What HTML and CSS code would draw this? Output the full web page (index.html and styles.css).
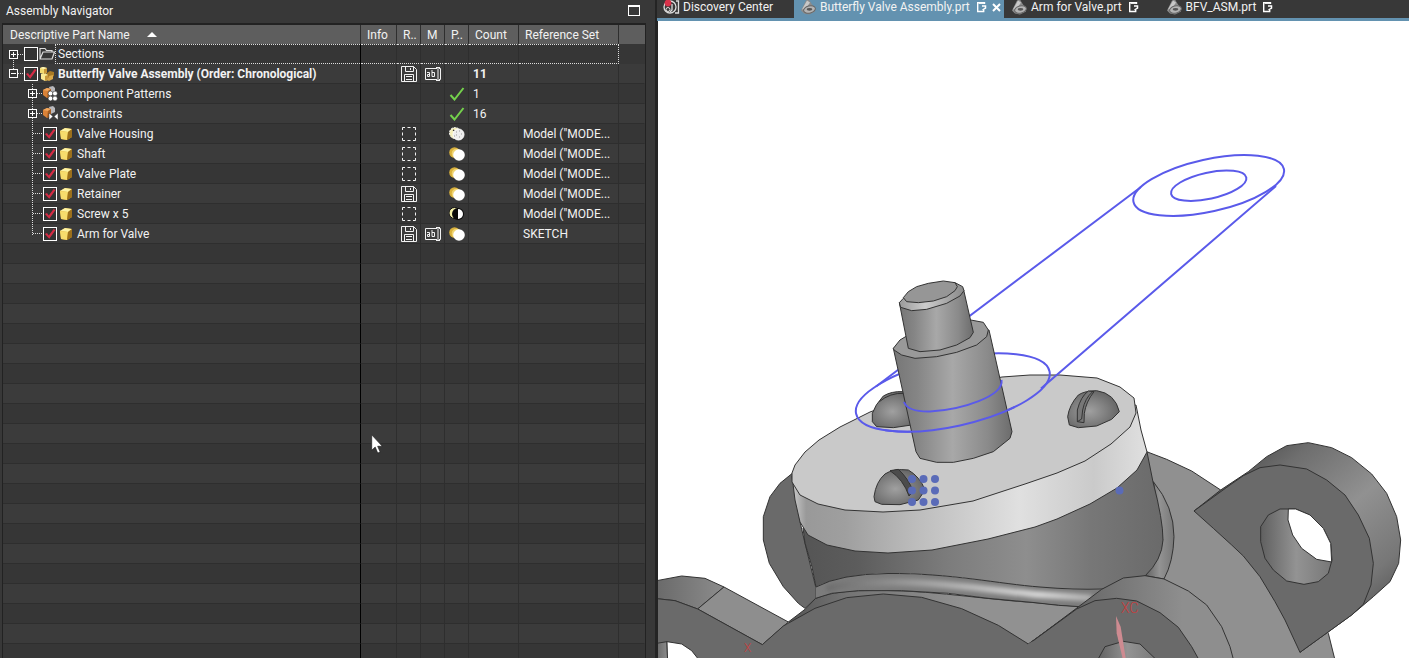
FILE: index.html
```html
<!DOCTYPE html>
<html lang="en">
<head>
<meta charset="utf-8">
<title>Assembly Navigator</title>
<link rel="stylesheet" href="styles.css">
</head>
<body>
<svg class="defs" aria-hidden="true">
  <symbol id="cube" viewBox="0 0 14 14"><path d="M1 4 6 1l7 1v8l-5 3-6-1z" fill="#d9a62e"/><path d="M1 4l5-3 7 1-4 3z" fill="#fdf3a4"/><path d="M1 4l8 1-1 8-6-1z" fill="#f7dc6c"/><path d="M9 5l4-3v8l-5 3z" fill="#9c701c"/></symbol>
  <symbol id="asm" viewBox="0 0 16 16"><path d="M1 2l3-1 4 1v5l-3 1-4-1z" fill="#f3dc70"/><path d="M8 7l3-2 4 1v4l-4 2-3-1z" fill="#a87a24"/><path d="M2 8l4-1 3 2v5l-3 1-4-2z" fill="#fbeb94"/><path d="M6 10l3-1v5l-3 1z" fill="#c8983a"/><path d="M10 10l4-1v4l-4 2-2-1z" fill="#d9a848"/><path d="M5 3l3-1v5l-3 1z" fill="#c8983a"/><path d="M1 2l3-1 4 1-3 1z" fill="#fff6b8"/></symbol>
  <symbol id="lump" viewBox="0 0 16 16"><path d="M7 1l4-1 2 2v4l-4 2z" fill="#b8b8bc"/><path d="M1 4l4-2 4 1v7l-4 2-4-3z" fill="#d98238"/><path d="M1 4l4-2 4 1-3 2z" fill="#f0a860"/><path d="M6 5l3-2v7l-4 2z" fill="#a35c20"/></symbol>
  <symbol id="pattern" viewBox="0 0 16 16"><use href="#lump"/><g fill="#fff" stroke="#333" stroke-width=".6"><circle cx="8.500" cy="7.500" r="2.400"/><circle cx="13" cy="7.500" r="2.400"/><circle cx="8.500" cy="12.500" r="2.400"/><circle cx="13" cy="12.500" r="2.400"/></g></symbol>
  <symbol id="constraint" viewBox="0 0 16 16"><use href="#lump"/><path d="M7 7l4 3.500-4 3.500zM16 7v7l-4-3.500z" fill="#fff" stroke="#333" stroke-width=".5"/></symbol>
  <symbol id="folder" viewBox="0 0 16 14"><path d="M1 12V1.500h5l1.500 2H13V5M1 12L4 5h11.500L13 12z" fill="none" stroke="#ddd" stroke-width="1.200"/></symbol>
  <symbol id="save" viewBox="0 0 16 16"><path d="M.5.5h12l3 3v12H.5zM4.500.500v5h8v-5M9.500 2v2M3.500 15.500v-7h9v7M5 10.500h6M5 13.500h6" fill="none" stroke="#f2f2f2"/></symbol>
  <symbol id="abi" viewBox="0 0 16 14"><path d="M12 1.500H.5v11H12M14 1.500h1.500v11H14M11 .5h4M11 13.500h4M13 .5v13" fill="none" stroke="#f2f2f2"/><path d="M2 5.500h2.500v4h-2v-2h2M7 3v6.500h2.500v-4H7" fill="none" stroke="#f2f2f2"/></symbol>
  <symbol id="dashed" viewBox="0 0 14 14"><path d="M.5 3V.5H3M5.500.500h3M11 .5h2.500V3M13.500 5.500v3M13.500 11v2.500H11M8.500 13.500h-3M3 13.500H.5V11M.5 8.500v-3" fill="none" stroke="#f2f2f2"/></symbol>
  <symbol id="tick" viewBox="0 0 16 14"><path d="M1.500 8l4 4.500L14.500 1" fill="none" stroke="#74d14c" stroke-width="2"/></symbol>
  <symbol id="pos" viewBox="0 0 16 14"><circle cx="5.500" cy="5.500" r="5.300" fill="#d9b13c"/><circle cx="7.500" cy="6.500" r="4.800" fill="#f0d470"/><circle cx="10" cy="8" r="5.800" fill="#fff"/></symbol>
  <symbol id="posmix" viewBox="0 0 16 14"><circle cx="6" cy="6" r="5.500" fill="#f4eeb8" stroke="#fff" stroke-dasharray="2 1"/><path d="M4 3l2 1-1 4 3 3" fill="none" stroke="#222" stroke-width="1.300"/><circle cx="9.500" cy="7.500" r="5.500" fill="#eee" stroke="#fff"/><path d="M7 5h1M10 4h1M12 7h1M7 8h1M10 10h1M5 9h1" stroke="#999"/></symbol>
  <symbol id="poshalf" viewBox="0 0 16 14"><circle cx="5.500" cy="6" r="5.500" fill="#f4f0a8" stroke="#111"/><circle cx="9" cy="7" r="6" fill="#0a0a0a"/><path d="M9 2a5 5 0 0 1 0 10z" fill="#fff"/></symbol>
  <symbol id="part" viewBox="0 0 16 15"><path d="M1 11L6 1l3-1 3 5 3 3v4l-6 3-5-1z" fill="#8b8b8b"/><path d="M2 10L7 1l3 2-4 6z" fill="#c8c8c8"/><ellipse cx="9.500" cy="10" rx="6" ry="3.600" fill="#b4b4b4" stroke="#666" transform="rotate(-14 9.500 10)"/><ellipse cx="9.500" cy="9.800" rx="2.800" ry="1.400" fill="#555"/></symbol>
  <symbol id="note" viewBox="0 0 11 12"><path d="M8.500 3V1.700H1.700v8.800h6V9" fill="none" stroke="#fff" stroke-width="1.400"/><path d="M3 1h5v1.800H3z" fill="#fff"/><path d="M6 5h3.500v2L6.500 9" fill="none" stroke="#fff" stroke-width="1.500"/></symbol>
</svg>

<main class="app">
  <section class="navigator">
    <header class="titlebar">
      <h1>Assembly Navigator</h1>
      <button class="maximize" aria-label="Maximize"></button>
    </header>
    <div class="grid">
      <table>
        <colgroup><col><col class="c-info"><col class="c-icon"><col class="c-icon"><col class="c-icon"><col class="c-count"><col class="c-ref"><col class="c-end"></colgroup>
        <thead><tr><th>Descriptive Part Name<span class="sort"></span></th><th>Info</th><th>R..</th><th>M</th><th>P..</th><th>Count</th><th>Reference Set</th><th></th></tr></thead>
        <tbody id="rows">
          <tr class="focused"><td class="name top-first"><div class="node"><button class="expander" aria-label="Expand Sections"></button><i class="stub"></i><input type="checkbox" id="n0"><label for="n0"><svg class="i-folder"><use href="#folder"/></svg><span>Sections</span></label></div></td><td></td><td></td><td></td><td></td><td></td><td></td><td></td></tr>
          <tr class="root"><td class="name top-last"><div class="node"><button class="expander open" aria-label="Collapse assembly"></button><i class="stub"></i><input type="checkbox" id="n1" checked><label for="n1"><svg class="i16"><use href="#asm"/></svg><span>Butterfly Valve Assembly (Order: Chronological)</span></label></div></td><td></td><td class="ic"><svg class="i16"><use href="#save"/></svg></td><td class="ic"><svg class="i-wide"><use href="#abi"/></svg></td><td></td><td>11</td><td></td><td></td></tr>
          <tr><td class="name child"><div class="node"><button class="expander" aria-label="Expand Component Patterns"></button><i class="stub"></i><svg class="i16"><use href="#pattern"/></svg><span class="text">Component Patterns</span></div></td><td></td><td></td><td></td><td class="ic"><svg class="i-wide"><use href="#tick"/></svg></td><td>1</td><td></td><td></td></tr>
          <tr><td class="name child"><div class="node"><button class="expander" aria-label="Expand Constraints"></button><i class="stub"></i><svg class="i16"><use href="#constraint"/></svg><span class="text">Constraints</span></div></td><td></td><td></td><td></td><td class="ic"><svg class="i-wide"><use href="#tick"/></svg></td><td>16</td><td></td><td></td></tr>
          <tr><td class="name child leaf"><div class="node"><i class="stub"></i><input type="checkbox" id="n2" checked><label for="n2"><svg class="i14"><use href="#cube"/></svg><span>Valve Housing</span></label></div></td><td></td><td class="ic"><svg class="i14"><use href="#dashed"/></svg></td><td></td><td class="ic"><svg class="i-wide"><use href="#posmix"/></svg></td><td></td><td>Model ("MODE...</td><td></td></tr>
          <tr><td class="name child leaf"><div class="node"><i class="stub"></i><input type="checkbox" id="n3" checked><label for="n3"><svg class="i14"><use href="#cube"/></svg><span>Shaft</span></label></div></td><td></td><td class="ic"><svg class="i14"><use href="#dashed"/></svg></td><td></td><td class="ic"><svg class="i-wide"><use href="#pos"/></svg></td><td></td><td>Model ("MODE...</td><td></td></tr>
          <tr><td class="name child leaf"><div class="node"><i class="stub"></i><input type="checkbox" id="n4" checked><label for="n4"><svg class="i14"><use href="#cube"/></svg><span>Valve Plate</span></label></div></td><td></td><td class="ic"><svg class="i14"><use href="#dashed"/></svg></td><td></td><td class="ic"><svg class="i-wide"><use href="#pos"/></svg></td><td></td><td>Model ("MODE...</td><td></td></tr>
          <tr><td class="name child leaf"><div class="node"><i class="stub"></i><input type="checkbox" id="n5" checked><label for="n5"><svg class="i14"><use href="#cube"/></svg><span>Retainer</span></label></div></td><td></td><td class="ic"><svg class="i16"><use href="#save"/></svg></td><td></td><td class="ic"><svg class="i-wide"><use href="#pos"/></svg></td><td></td><td>Model ("MODE...</td><td></td></tr>
          <tr><td class="name child leaf"><div class="node"><i class="stub"></i><input type="checkbox" id="n6" checked><label for="n6"><svg class="i14"><use href="#cube"/></svg><span>Screw x 5</span></label></div></td><td></td><td class="ic"><svg class="i14"><use href="#dashed"/></svg></td><td></td><td class="ic"><svg class="i-wide"><use href="#poshalf"/></svg></td><td></td><td>Model ("MODE...</td><td></td></tr>
          <tr><td class="name child leaf last"><div class="node"><i class="stub"></i><input type="checkbox" id="n7" checked><label for="n7"><svg class="i14"><use href="#cube"/></svg><span>Arm for Valve</span></label></div></td><td></td><td class="ic"><svg class="i16"><use href="#save"/></svg></td><td class="ic"><svg class="i-wide"><use href="#abi"/></svg></td><td class="ic"><svg class="i-wide"><use href="#pos"/></svg></td><td></td><td>SKETCH</td><td></td></tr>
        </tbody>
      </table>
    </div>
  </section>

  <section class="workspace">
    <nav class="tabs">
      <a class="tab discovery" href="#discovery"><svg class="i-disc" viewBox="0 0 18 16"><circle cx="7" cy="8" r="6" fill="none" stroke="#ddd" stroke-width="1.300"/><circle cx="5" cy="10.500" r="2" fill="none" stroke="#ddd"/><path d="M9 5v6l-2 2M13 2h2.500v12H12" fill="none" stroke="#ddd" stroke-width="1.300"/><circle cx="5" cy="4" r="3.400" fill="#d8324a"/></svg>Discovery Center</a>
      <div class="tab active"><a href="#butterfly"><svg class="i16"><use href="#part"/></svg>Butterfly Valve Assembly.prt</a><svg class="i-note"><use href="#note"/></svg><button class="close" aria-label="Close tab"><svg viewBox="0 0 9 9"><path d="M1 1l7 7M8 1L1 8" stroke="#fff" stroke-width="2"/></svg></button></div>
      <a class="tab" href="#arm"><svg class="i16"><use href="#part"/></svg>Arm for Valve.prt<svg class="i-note"><use href="#note"/></svg></a>
      <a class="tab last-tab" href="#bfv"><svg class="i16"><use href="#part"/></svg>BFV_ASM.prt<svg class="i-note"><use href="#note"/></svg></a>
    </nav>
    <svg class="scene" viewBox="658 21 751 637" preserveAspectRatio="xMinYMin slice" role="img" aria-label="Butterfly valve model">
      <defs>
        <linearGradient id="gShaft"><stop offset="0" stop-color="#767676"/><stop offset=".2" stop-color="#858585"/><stop offset=".5" stop-color="#a8a8a8"/><stop offset=".8" stop-color="#8a8a8a"/><stop offset="1" stop-color="#6c6c6c"/></linearGradient>
        <linearGradient id="gChamfer"><stop offset="0" stop-color="#999"/><stop offset=".4" stop-color="#ccc"/><stop offset="1" stop-color="#8a8a8a"/></linearGradient>
        <linearGradient id="gRim"><stop offset="0" stop-color="#ccc"/><stop offset=".04" stop-color="#999"/><stop offset=".15" stop-color="#9f9f9f"/><stop offset=".35" stop-color="#bcbcbc"/><stop offset=".64" stop-color="#e0e0e0"/><stop offset=".85" stop-color="#cacaca"/><stop offset="1" stop-color="#e0e0e0"/></linearGradient>
        <linearGradient id="gBody"><stop offset="0" stop-color="#555"/><stop offset=".15" stop-color="#5c5c5c"/><stop offset=".4" stop-color="#7c7c7c"/><stop offset=".62" stop-color="#8e8e8e"/><stop offset=".8" stop-color="#777"/><stop offset="1" stop-color="#6a6a6a"/></linearGradient>
        <linearGradient id="gFillet"><stop offset="0" stop-color="#6c6c6c"/><stop offset=".35" stop-color="#a0a0a0"/><stop offset=".8" stop-color="#d8d8d8"/><stop offset="1" stop-color="#b0b0b0"/></linearGradient>
        <linearGradient id="gEar" x1="0" y1="0" x2=".8" y2="1"><stop offset=".12" stop-color="#4c4c4c"/><stop offset=".28" stop-color="#6e6e6e"/><stop offset=".55" stop-color="#919191"/><stop offset=".8" stop-color="#777"/><stop offset="1" stop-color="#4c4c4c"/></linearGradient>
        <linearGradient id="gEar2"><stop offset="0" stop-color="#444"/><stop offset=".35" stop-color="#707070"/><stop offset=".75" stop-color="#8e8e8e"/></linearGradient>
        <linearGradient id="gLeft"><stop offset="0" stop-color="#6a6a6a"/><stop offset="1" stop-color="#8c8c8c"/></linearGradient>
        <linearGradient id="gSkirt"><stop offset="0" stop-color="#555"/><stop offset=".2" stop-color="#747474"/><stop offset=".6" stop-color="#919191"/></linearGradient>
        <linearGradient id="gHole"><stop offset="0" stop-color="#606060"/><stop offset=".5" stop-color="#939393"/><stop offset="1" stop-color="#777"/></linearGradient>
        <radialGradient id="gScrew" cx=".42" cy=".55" r=".6"><stop offset="0" stop-color="#a0a0a0"/><stop offset=".6" stop-color="#7c7c7c"/><stop offset="1" stop-color="#636363"/></radialGradient>
        <filter id="soft" x="-5%" y="-60%" width="110%" height="220%"><feGaussianBlur stdDeviation="7"/></filter>
        <clipPath id="front"><path d="M885 398h130v50H885z"/></clipPath>
      </defs>
      <g class="solid">
        <g transform="translate(1030 420) scale(.333333)">
          <path fill="#909090" d="M350 95 410 118 485 153 572 210 895 640 915 720 0 720 0 450 300 300z"/>
          <path fill="url(#gEar)" d="M492 273 572 210 655 155 710 110 770 77 835 68 905 83 965 113 1025 162 1070 220 1100 290 1112 360 1106 430 1080 485 1030 530 965 585 810 697 840 500 700 300z"/>
          <path fill="#6a6a6a" d="M492 273 600 195 640 167 690 143 750 135 830 147 890 180 945 225 985 285 1018 355 1030 430 1023 495 1000 553 965 585 810 697 765 600 735 545 690 470 640 408 605 375 550 325z"/>
          <path fill="url(#gHole)" d="M692 320 715 285 750 267 797 267 840 285 880 325 902 370 906 420 895 460 865 485 822 493 770 483 730 450 705 415 692 365z"/>
          <path fill="#fff" d="M775 267H797L840 285 880 325 902 370 905 426 860 418 815 385 788 345 774 300z"/>
          <path fill="url(#gHole)" d="M370 185Q432 260 432 350Q430 425 402 477L345 467 398 360z"/>
        </g>
        <g transform="translate(655 440) scale(.333333)">
          <path fill="#6a6a6a" d="M412 100 375 130 345 170 325 230 325 300 343 370 385 440 430 490 450 505 482 475 482 440 450 310 435 245z"/>
          <path fill="url(#gSkirt)" d="M400 546 450 508 482 475Q530 455 610 452C800 445 950 475 1140 488L1275 500 1120 612 700 640z"/>
          <path class="bare" fill="#7c7c7c" d="M482 440 530 418 600 406 700 400 840 405 1000 422 1140 437 1245 449 1341 449 1275 500 1140 488 1000 475 880 460 740 452 610 452 530 460 482 475z"/>
          <path class="bare glow" d="M515 446Q600 424 740 427C900 430 1050 455 1140 463L1310 474"/>
          <path fill="none" d="M482 475 530 460 610 452 740 452 880 460 1000 475 1140 488 1210 496 1275 500"/>
        </g>
        <path fill="url(#gBody)" d="M803 528 805 543 812 567 816 587Q840 574 888 573.500C950 573 1000 584 1040 587Q1075 590 1102 589L1145 576Q1162 560 1163 540Q1163 520 1153 482L1147 452 1000 470z"/>
        <path fill="url(#gRim)" d="M792 476 795 500 800 522 808 535 827 545 855 551 888 553 932 550 988 539 1035 527 1057 519 1090 504 1117 488 1137 470 1147 452 1141 430 1136 405z"/>
        <path fill="#c9c9c9" d="M792 482 792 473 795 465 805 452 819 440 840 427 870 412 930 390 1002 377 1030 375 1060 375 1097 378 1120 387 1134 398 1136 413 1130 427 1111 444 1085 461 1057 473 1025 484 973 501 920 510 883 512 845 510 818 504 800 495z"/>
        <g transform="translate(655 440) scale(.333333)">
          <path fill="url(#gLeft)" d="M5 422 80 408 150 415 207 441 128 507 60 482 5 476z"/>
          <path fill="#8e8e8e" d="M207 441 400 546 322 614 128 507z"/>
          <path fill="#6a6a6a" d="M5 476 60 482 128 507 322 614 385 558 480 505 575 473 685 462 800 472 920 506 1030 556 1120 612 1125 670 5 670z"/>
          <path fill="url(#gLeft)" d="M5 610 36 605 38 670 5 670z"/>
          <path fill="#fff" d="M36 605 80 612 110 632 140 670 38 670z"/>
        </g>
        <g transform="translate(1030 420) scale(.333333)">
          <path fill="url(#gEar2)" d="M-5 673 150 557 215 508 280 474 345 467 402 477 475 513 530 555 575 620 600 680 612 725H-5z"/>
          <path fill="#6a6a6a" d="M-5 673 140 567 195 542 260 535 320 543 390 578 445 622 485 680 510 725H-10z"/>
          <path fill="url(#gHole)" d="M200 725 225 680 280 664 330 672 385 725z"/>
          <path class="bare" fill="#6a6a6a" d="M-12 676 8 664 8 725-12 725z"/>
          <path class="bare" fill="#ce8b91" d="M258 588 272 620 288 720H279L260 640z"/>
        </g>
        <g transform="translate(840 270) scale(.333333)">
          <path fill="url(#gScrew)" d="M97 430Q105 405 130 378 155 363 190 365L240 400 215 465 160 473 110 470 97 455z"/>
          <path fill="none" d="M118 395Q150 368 192 370"/>
          <path fill="url(#gScrew)" d="M683 440Q688 405 715 375 735 362 770 362 825 370 838 425L815 448 770 468 715 473 688 465z"/>
          <path fill="#777" d="M712 455V420Q722 380 745 363L762 365Q738 395 733 430L732 458z"/>
          <path fill="none" d="M712 455 725 447 728 420Q735 385 757 366"/>
          <path fill="url(#gScrew)" d="M102 680Q108 635 135 612 160 595 205 600 240 620 255 660L235 690 180 704 125 703 105 695z"/>
          <path fill="#4c4c4c" d="M150 602 175 598Q205 625 220 665L207 678Q190 628 150 602z"/>
        </g>
      </g>
      <g class="sketch">
        <ellipse cx="952.800" cy="392.500" rx="99" ry="33.700" transform="rotate(-12.400 952.800 392.500)"/>
        <path d="M1141 187 876 386.500M1276 186 1041 388.500"/>
        <ellipse cx="1208.700" cy="185.500" rx="77" ry="26.200" transform="rotate(-12.400 1208.700 185.500)"/>
        <ellipse cx="1208.700" cy="185.700" rx="38.500" ry="13.100" transform="rotate(-12.400 1208.700 185.700)"/>
      </g>
      <g class="solid" transform="translate(840 270) scale(.333333)">
        <path fill="url(#gShaft)" d="M160 235 228 545 240 565 290 577 340 577 400 565 460 545 510 505 516 485 447 180z"/>
        <path fill="#999" d="M160 235 180 210 205 195 300 165 392 150 430 157 445 180 440 200 410 225 350 247 290 260 225 265 185 255 162 240z"/>
        <path fill="url(#gShaft)" d="M178 98 205 235 240 245 300 240 350 225 390 203 400 187 371 60z"/>
        <path fill="url(#gChamfer)" d="M178 98 182 112 215 122 260 118 320 100 360 78 372 62 368 50 345 38 190 85z"/>
        <path fill="#969696" d="M190 83 205 65 230 50 265 40 310 33 345 38 352 50 345 62 320 80 280 93 235 98 200 95z"/>
      </g>
      <g class="sketch">
        <g clip-path="url(#front)"><ellipse cx="952.800" cy="392.500" rx="99" ry="33.700" transform="rotate(-12.400 952.800 392.500)"/></g>
        <path d="M904 402Q908 412 930 411.500C962 410 1004 396 1001.500 380"/>
      </g>
      <g class="dots">
        <circle cx="912" cy="479" r="4"/><circle cx="923.500" cy="479" r="4"/><circle cx="935" cy="479" r="4"/>
        <circle cx="912" cy="490.500" r="4"/><circle cx="923.500" cy="490.500" r="4"/><circle cx="935" cy="490.500" r="4"/>
        <circle cx="912" cy="502" r="4"/><circle cx="923.500" cy="502" r="4"/><circle cx="935" cy="502" r="4"/>
        <circle cx="1119.500" cy="490.500" r="4"/>
      </g>
      <text class="axis" x="1121" y="613">XC</text>
      <text class="axis small" x="744" y="652">X</text>
    </svg>
  </section>
</main>
<svg class="cursor" viewBox="0 0 12 20" aria-hidden="true"><path d="M.7.8v15.500l3.500-3.200 2.500 6 2.500-1-2.500-5.800h4.600z" fill="#fff" stroke="#222" stroke-width=".7"/></svg>
<script src="rows.js"></script>
</body>
</html>
```
FILE: styles.css
```css
* { box-sizing: border-box; }
body {
  margin: 0;
  height: 100vh;
  overflow: hidden;
  background: #383838;
  color: #f2f2f2;
  font: 12px/16px Roboto, "Open Sans", sans-serif;
}
button { padding: 0; border: 0; background: none; color: inherit; font: inherit; }
a { color: inherit; text-decoration: none; }
svg { display: block; flex: none; }
.defs { position: absolute; width: 0; height: 0; }
.app {
  display: grid;
  grid-template-columns: minmax(0, 657fr) minmax(0, 752fr);
  height: 100vh;
}

/* navigator */
.navigator {
  display: flex;
  flex-direction: column;
  min-height: 0;
  padding: 0 9px 0 2px;
  border-right: 2px solid #242424;
}
.titlebar {
  display: flex;
  align-items: center;
  justify-content: space-between;
  flex: none;
  height: 23px;
  padding: 0 6px 2px 4px;
}
h1 { margin: 0; font-size: 12px; font-weight: 400; }
.maximize { width: 12px; height: 11px; border: 1px solid #fff; border-top-width: 2px; }
.grid {
  flex: 1;
  min-height: 0;
  overflow: hidden;
  border: 1px solid #222;
  border-top-width: 2px;
  border-bottom: 0;
}
table { width: 100%; table-layout: fixed; border-collapse: separate; border-spacing: 0; }
.c-info { width: 36px; }
.c-icon { width: 24px; }
.c-count { width: 50px; }
.c-ref { width: 100px; }
.c-end { width: 26px; }
th, td {
  overflow: hidden;
  border-right: 1px solid #2e2e2e;
  font-weight: 400;
  text-align: left;
  white-space: nowrap;
}
th { height: 19px; padding: 0 0 0 6px; background: #5e5e5e; }
th:first-child { padding-left: 7px; }
td { height: 20px; padding: 0 0 0 4px; border-bottom: 1px solid #2e2e2e; line-height: 18px; }
tr > :last-child { border-right-color: transparent; }
tbody tr { background: #363636; }
tbody tr:nth-child(even) { background: #3b3b3b; }
td:first-child { border-right-color: #000; }
.root td { font-weight: 700; }
.sort {
  display: inline-block;
  margin-left: 17px;
  border: 5px solid transparent;
  border-top: 0;
  border-bottom-color: #fff;
  vertical-align: 2px;
}
.ic { padding: 0; }
.ic svg { margin: 0 auto; }
.i16 { width: 16px; height: 16px; }
.i14 { width: 14px; height: 14px; }
.i-wide { width: 16px; height: 14px; }
.i-folder { width: 16px; height: 14px; }

.name {
  --guide: repeating-linear-gradient(#ddd 0 1px, transparent 1px 2px);
  padding: 0;
  background-repeat: no-repeat;
}
.node { display: flex; align-items: center; height: 19px; padding-left: 6px; }
.top-first { background-image: var(--guide); background-position: 10px 100%; background-size: 1px 10px; }
.top-last { background-image: var(--guide); background-position: 10px 0; background-size: 1px 10px; }
.child { background-image: var(--guide); background-position: 29px 0; background-size: 1px 100%; }
.child.last { background-size: 1px 11px; }
.child .node { padding-left: 25px; }
.leaf .node { padding-left: 30px; }
.stub { width: 6px; height: 1px; background: repeating-linear-gradient(90deg, #ddd 0 1px, transparent 1px 2px); }
.child .stub { width: 5px; }
.leaf .stub { width: 10px; }
.expander {
  width: 9px;
  height: 9px;
  border: 1px solid #fff;
  background:
    linear-gradient(#fff, #fff) center / 5px 1px no-repeat,
    linear-gradient(#fff, #fff) center / 1px 5px no-repeat,
    #363636;
}
.expander.open { background: linear-gradient(#fff, #fff) center / 5px 1px no-repeat, #363636; }
input[type="checkbox"] {
  appearance: none;
  flex: none;
  width: 14px;
  height: 14px;
  margin: 0;
  border: 1px solid #fff;
  background: #333;
}
input:checked::before {
  content: "";
  display: block;
  width: 12px;
  height: 12px;
  background: #d52b45;
  clip-path: polygon(8% 55%, 25% 45%, 40% 66%, 80% 12%, 96% 20%, 44% 94%);
}
label { display: flex; align-items: center; gap: 3px; flex: 1; padding-left: 1px; min-width: 0; }
.leaf label { padding-left: 2px; gap: 4px; }
.text { padding-left: 3px; }
.focused td { border-bottom: 0; }
.focused .node { height: 20px; }
.focused label { align-self: stretch; gap: 0; }
.focused label span { flex: 1; height: 20px; padding-left: 2px; line-height: 18px; border: 1px dotted #ddd; border-right: 0; }
.focused td:not(:first-child):not(:last-child) { border-top: 1px dotted #ddd; border-bottom: 1px dotted #ddd; }
.focused td:nth-last-child(2) { border-right: 1px dotted #ddd; }

/* document tabs */
.workspace { display: flex; flex-direction: column; min-width: 0; min-height: 0; }
.tabs {
  display: flex;
  flex: none;
  height: 21px;
  background: linear-gradient(#383838, #383838 18px, #6392b0 18px);
}
.tab { display: flex; align-items: center; height: 18px; padding: 0 0 4px 7px; line-height: 14px; white-space: nowrap; }
.tab a { display: flex; align-items: center; }
.tab .i16 { margin-right: 4px; }
.discovery { width: 137px; }
.i-disc { width: 18px; height: 16px; margin-right: 2px; }
.discovery { padding-left: 6px; }
.active { width: 210px; height: 21px; padding: 0 0 7px 6px; background: #6392b0; }
.i-note { width: 11px; height: 12px; margin-left: 6px; }
.close { margin-left: 5px; }
.close svg { width: 9px; height: 9px; }
.last-tab { padding-left: 27px; }

/* model view */
.scene {
  flex: 1;
  width: 100%;
  min-height: 0;
  border-left: 1px solid #242424;
  background: #fff;
}
.solid path { stroke: #333; stroke-width: 1; vector-effect: non-scaling-stroke; stroke-linejoin: round; }
.solid .bare { stroke: none; }
.solid .glow { fill: none; stroke: url(#gFillet); stroke-width: 20px; vector-effect: none; filter: url(#soft); }
.sketch { fill: none; stroke: #5a5aea; stroke-width: 2; }
.dots { fill: #5a6bb8; }
.axis { fill: #c83c3c; font-size: 14px; font-weight: 300; }
.axis.small { font-size: 12px; }
.cursor { position: absolute; left: 371px; top: 434px; width: 12px; height: 20px; }
```
FILE: rows.js
```js
// Fill the rest of the grid with blank rows.
const body = document.getElementById("rows");
const columns = 8;
const needed = Math.ceil(window.innerHeight / 20) - body.rows.length;
for (let i = 0; i < needed; i++) {
  const row = body.insertRow();
  for (let c = 0; c < columns; c++) row.insertCell();
}
```
